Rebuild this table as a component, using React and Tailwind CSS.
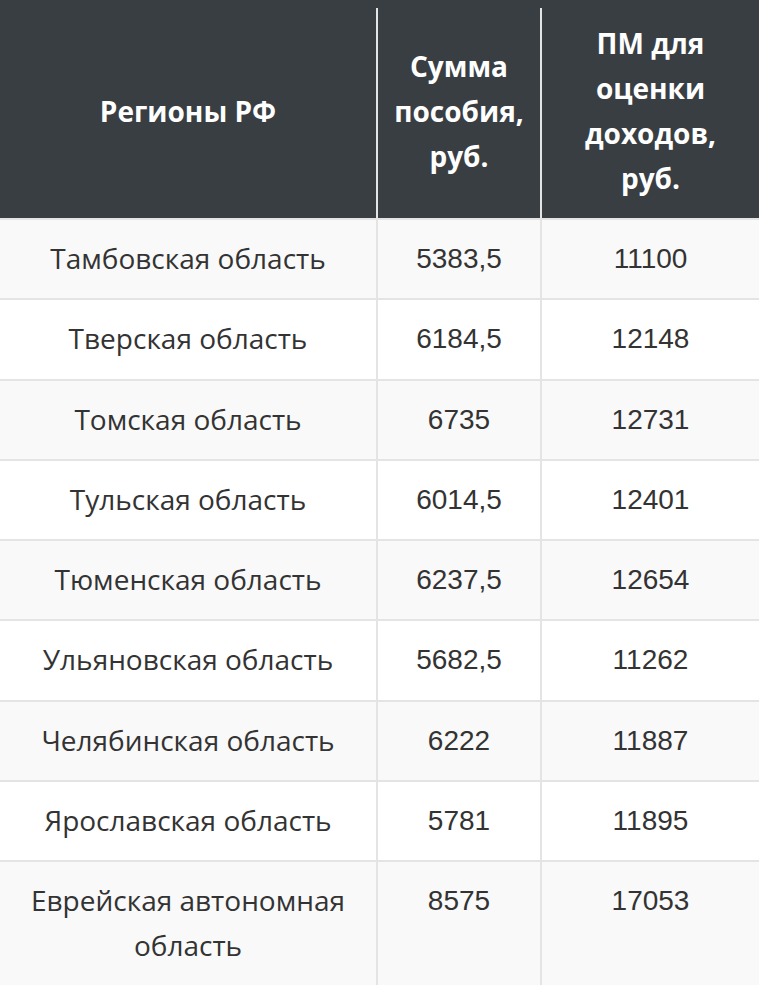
const rows = [
  ["Тамбовская область", "5383,5", "11100"],
  ["Тверская область", "6184,5", "12148"],
  ["Томская область", "6735", "12731"],
  ["Тульская область", "6014,5", "12401"],
  ["Тюменская область", "6237,5", "12654"],
  ["Ульяновская область", "5682,5", "11262"],
  ["Челябинская область", "6222", "11887"],
  ["Ярославская область", "5781", "11895"],
  ["Еврейская автономная область", "8575", "17053"],
];

export default function App() {
  return (
    <div className="w-[759px] h-[988px] overflow-hidden bg-white">
      <div className="bg-[#393e43] pt-2">
        <table className="w-full table-fixed border-collapse font-['Open_Sans',sans-serif] text-[28px] leading-[45px]">
          <colgroup>
            <col className="w-[377px]" />
            <col className="w-[164px]" />
            <col className="w-[218px]" />
          </colgroup>
          <thead>
            <tr className="bg-[#393e43] text-white">
              <th className="h-[211px] px-4 pb-1 align-middle font-bold">Регионы РФ</th>
              <th className="h-[211px] px-2 pb-1 align-middle font-bold border-l-2 border-[#e4e4e4]">
                Сумма пособия, руб.
              </th>
              <th className="h-[211px] px-5 pb-1 align-middle font-bold border-l-2 border-[#e4e4e4]">
                ПМ для оценки доходов, руб.
              </th>
            </tr>
          </thead>
          <tbody>
            {rows.map((r, i) => (
              <tr
                key={r[0]}
                className={
                  (i % 2 === 0 ? "bg-[#f9f9f9]" : "bg-white") +
                  " border-t-2 border-[#e4e4e4] text-[#333]"
                }
              >
                <td className="px-4 pt-[16px] pb-[17.25px] align-top text-center">{r[0]}</td>
                <td className="px-2 pt-[16px] pb-[17.25px] align-top text-center border-l-2 border-[#e4e4e4] font-['Liberation_Sans',sans-serif]">
                  {r[1]}
                </td>
                <td className="px-5 pt-[16px] pb-[17.25px] align-top text-center border-l-2 border-[#e4e4e4] font-['Liberation_Sans',sans-serif]">
                  {r[2]}
                </td>
              </tr>
            ))}
          </tbody>
        </table>
      </div>
    </div>
  );
}
